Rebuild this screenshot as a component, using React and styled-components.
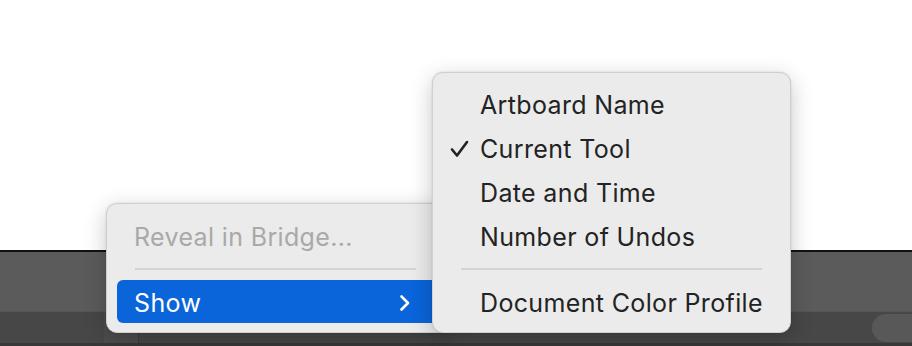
import React from 'react';
import styled, { createGlobalStyle } from 'styled-components';

const GlobalStyle = createGlobalStyle`
  html, body {
    margin: 0;
    padding: 0;
    background: #ffffff;
  }
  body {
    font-family: Inter, "Noto Sans", "Liberation Sans", sans-serif;
    -webkit-font-smoothing: antialiased;
  }
`;

const Screen = styled.div`
  position: relative;
  width: 912px;
  height: 346px;
  overflow: hidden;
  display: flex;
  flex-direction: column;
`;

const Canvas = styled.div`
  height: 250px;
  background: #ffffff;
  border-bottom: 2px solid #111111;
`;

const InfoBar = styled.div`
  height: 59px;
  background: #5b5b5b;
  border-bottom: 1px solid #555555;
`;

const StatusBar = styled.div`
  flex: 1;
  display: flex;
  align-items: center;
  justify-content: space-between;
  background: #474747;
  border-bottom: 3px solid #383838;
`;

const Toggle = styled.div`
  width: 34px;
  height: 100%;
  margin-left: 104px;
  background: #4d4d4d;
  border-right: 1px solid #3c3c3c;
`;

const Pill = styled.div`
  width: 60px;
  height: 28px;
  margin-right: -20px;
  border-radius: 14px;
  background: #585858;
`;

const Menu = styled.div`
  position: absolute;
  left: ${p => p.$left}px;
  top: ${p => p.$top}px;
  width: ${p => p.$width}px;
  box-sizing: border-box;
  padding: ${p => p.$pad};
  background: #ebebeb;
  border: 1px solid #cfcfcf;
  border-radius: 11px;
  box-shadow: 0 6px 22px rgba(0, 0, 0, 0.22), 0 0 2px rgba(0, 0, 0, 0.12);
  z-index: ${p => p.$z};
`;

const Item = styled.div`
  display: flex;
  align-items: center;
  height: ${p => p.$h || 44}px;
  padding: 2px ${p => p.$right || 22}px 0 ${p => p.$indent}px;
  border-radius: 6px;
  font-size: 25px;
  letter-spacing: 0.35px;
  color: ${p => (p.$disabled ? '#a9a9a9' : p.$active ? '#ffffff' : '#232323')};
  background: ${p => (p.$active ? '#0a64da' : 'transparent')};
  box-sizing: border-box;
`;

const Check = styled.span`
  width: 30px;
  margin-left: -30px;
  display: flex;
  align-items: center;
`;

const Label = styled.span`
  flex: 1;
  white-space: nowrap;
`;

const Separator = styled.div`
  height: 2px;
  margin: ${p => p.$margin};
  background: #d3d3d3;
`;

const Chevron = () => (
  <svg width="12" height="18" viewBox="0 0 12 18">
    <path d="M2.5 2.5 L9 9 L2.5 15.5" fill="none" stroke="#ffffff" strokeWidth="2.6" strokeLinecap="round" strokeLinejoin="round" />
  </svg>
);

const CheckMark = () => (
  <svg width="19" height="18" viewBox="0 0 19 18">
    <path d="M2 9.5 L7 15.5 L17 2" fill="none" stroke="#232323" strokeWidth="2.6" strokeLinecap="round" strokeLinejoin="round" />
  </svg>
);

const showItems = [
  { label: 'Artboard Name' },
  { label: 'Current Tool', checked: true },
  { label: 'Date and Time' },
  { label: 'Number of Undos' },
];

export default function App() {
  return (
    <Screen>
      <GlobalStyle />
      <Canvas />
      <InfoBar />
      <StatusBar>
        <Toggle />
        <Pill />
      </StatusBar>

      <Menu $left={106} $top={203} $width={345} $pad="10px 10px 9px" $z={1}>
        <Item $indent={17} $disabled>
          <Label>Reveal in Bridge...</Label>
        </Item>
        <Separator $margin="10px 24px 10px 18px" />
        <Item $indent={17} $right={29} $h={43} $active>
          <Label>Show</Label>
          <Chevron />
        </Item>
      </Menu>

      <Menu $left={432} $top={72} $width={359} $pad="9px 10px 8px" $z={2}>
        {showItems.map(item => (
          <Item key={item.label} $indent={37}>
            {item.checked && (
              <Check>
                <CheckMark />
              </Check>
            )}
            <Label>{item.label}</Label>
          </Item>
        ))}
        <Separator $margin="10px 18px 10px 18px" />
        <Item $indent={37}>
          <Label>Document Color Profile</Label>
        </Item>
      </Menu>
    </Screen>
  );
}
